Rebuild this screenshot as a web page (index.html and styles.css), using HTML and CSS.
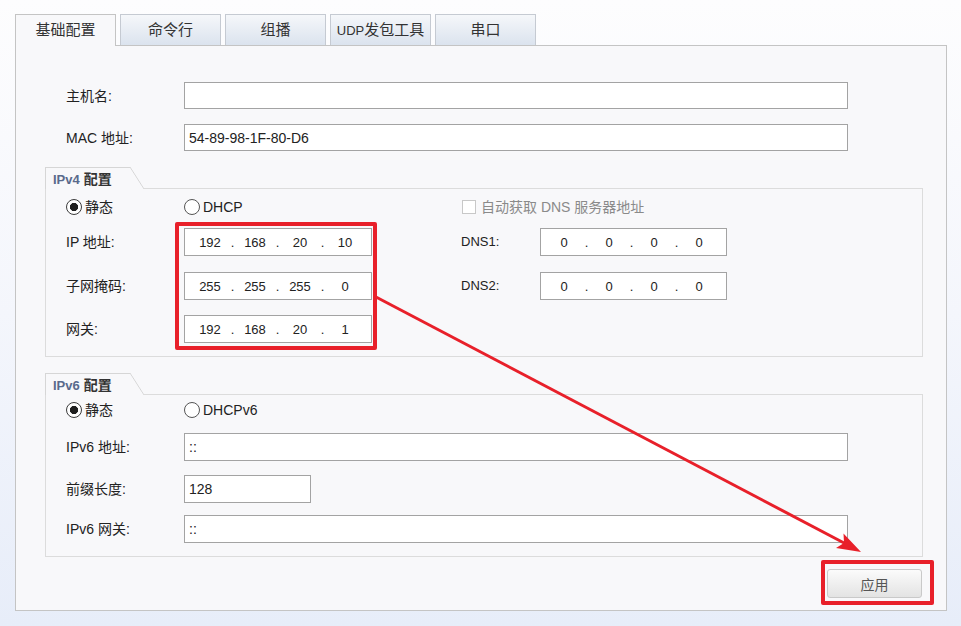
FILE: index.html
```html
<!DOCTYPE html>
<html lang="zh-CN">
<head>
<meta charset="utf-8">
<title>基础配置</title>
<link rel="stylesheet" href="styles.css">
</head>
<body>
<div class="page">
  <div class="tabs">
    <div class="tab active">基础配置</div>
    <div class="tab">命令行</div>
    <div class="tab">组播</div>
    <div class="tab"><span class="small">UDP</span>发包工具</div>
    <div class="tab">串口</div>
  </div>
  <div class="panel">
    <div class="row first">
      <label class="lbl">主机名:</label>
      <div class="field wide"></div>
    </div>
    <div class="row second">
      <label class="lbl">MAC 地址:</label>
      <div class="field wide">54-89-98-1F-80-D6</div>
    </div>

    <div class="section v4">
      <div class="sec-head"><span class="en">IPv4</span> 配置</div>
      <div class="sec-body">
        <div class="line radios">
          <div class="opt col1"><span class="radio on"></span>静态</div>
          <div class="opt col2"><span class="radio"></span>DHCP</div>
          <div class="opt check"><span class="box"></span>自动获取 DNS 服务器地址</div>
        </div>
        <div class="line r1">
          <label class="lbl">IP 地址:</label>
          <div class="field ip"><span>192</span><i>.</i><span>168</span><i>.</i><span>20</span><i>.</i><span>10</span></div>
          <label class="lbl dns">DNS1:</label>
          <div class="field ip dnsip"><span>0</span><i>.</i><span>0</span><i>.</i><span>0</span><i>.</i><span>0</span></div>
        </div>
        <div class="line r2">
          <label class="lbl">子网掩码:</label>
          <div class="field ip"><span>255</span><i>.</i><span>255</span><i>.</i><span>255</span><i>.</i><span>0</span></div>
          <label class="lbl dns">DNS2:</label>
          <div class="field ip dnsip"><span>0</span><i>.</i><span>0</span><i>.</i><span>0</span><i>.</i><span>0</span></div>
        </div>
        <div class="line r3">
          <label class="lbl">网关:</label>
          <div class="field ip"><span>192</span><i>.</i><span>168</span><i>.</i><span>20</span><i>.</i><span>1</span></div>
        </div>
      </div>
    </div>

    <div class="section v6">
      <div class="sec-head"><span class="en">IPv6</span> 配置</div>
      <div class="sec-body">
        <div class="line radios">
          <div class="opt col1"><span class="radio on"></span>静态</div>
          <div class="opt col2"><span class="radio"></span>DHCPv6</div>
        </div>
        <div class="line s1">
          <label class="lbl">IPv6 地址:</label>
          <div class="field wide">::</div>
        </div>
        <div class="line s2">
          <label class="lbl">前缀长度:</label>
          <div class="field short">128</div>
        </div>
        <div class="line s3">
          <label class="lbl">IPv6 网关:</label>
          <div class="field wide">::</div>
        </div>
      </div>
    </div>

    <div class="actions">
      <button class="apply">应用</button>
    </div>
  </div>

  <div class="mark mark-ip"></div>
  <div class="mark mark-btn"></div>
  <svg class="arrow" width="961" height="626" viewBox="0 0 961 626">
    <line x1="376" y1="297" x2="846" y2="544" stroke="#e8202a" stroke-width="3"/>
    <polygon points="861,552 836,548 844,543 843.5,533.5" fill="#e8202a"/>
  </svg>
</div>
</body>
</html>
```

FILE: styles.css
```css
html, body {
  margin: 0;
  padding: 0;
}
body {
  width: 961px;
  height: 626px;
  overflow: hidden;
  background: linear-gradient(#fdfdfe 0%, #f4f6fc 50%, #e7edf9 100%);
  font-family: "Liberation Sans", "Noto Sans CJK SC", sans-serif;
  font-size: 14px;
  color: #222;
}
.page {
  position: relative;
  width: 961px;
  height: 626px;
  padding: 14px 0 0 15px;
  box-sizing: border-box;
}

/* tabs */
.tabs {
  display: flex;
  gap: 4px;
  height: 31px;
  position: relative;
  z-index: 2;
}
.tab {
  width: 101px;
  height: 31px;
  box-sizing: border-box;
  border: 1px solid #c5cad2;
  border-bottom: none;
  background: linear-gradient(#f5f7fa, #dbe3ee);
  text-align: center;
  line-height: 30px;
  font-size: 15px;
  color: #333;
}
.tab .small {
  font-size: 13px;
}
.tab.active {
  background: #f8f8fa;
  border-color: #c4c4c4;
  height: 32px;
}

/* main panel */
.panel {
  width: 932px;
  height: 566px;
  box-sizing: border-box;
  border: 1px solid #c4c4c4;
  background: #f8f8fa;
  padding: 36px 23px 0 29px;
}
.row {
  display: flex;
  align-items: center;
  padding-left: 21px;
  height: 27px;
}
.row.second {
  margin-top: 15px;
}
.lbl {
  width: 118px;
  flex: none;
  line-height: 20px;
}
.field {
  box-sizing: border-box;
  height: 28px;
  border: 1px solid #a3a3a3;
  background: #fff;
  display: flex;
  align-items: center;
  padding-left: 4px;
  font-size: 14px;
  color: #222;
}
.row .field {
  height: 27px;
}
.field.wide {
  width: 664px;
}
.field.short {
  width: 127px;
}

/* sections */
.section {
  width: 878px;
  margin-top: 16px;
}
.sec-head {
  position: relative;
  z-index: 1;
  width: 85px;
  height: 22px;
  box-sizing: border-box;
  border-top: 1px solid #d6d6d6;
  border-left: 1px solid #d6d6d6;
  background: #f8f8fa;
  margin-bottom: -1px;
  padding-left: 7px;
  line-height: 22px;
  font-size: 14px;
  font-weight: bold;
  color: #333;
}
.sec-head::after {
  content: "";
  position: absolute;
  left: 100%;
  top: -1px;
  width: 14px;
  height: 22px;
  background: linear-gradient(to top right, #f8f8fa calc(50% - 0.8px), #d6d6d6 50%, #f8f8fa calc(50% + 0.8px));
}
.sec-head .en {
  color: #5a6a8c;
  font-size: 13px;
}
.sec-body {
  border: 1px solid #dcdcdc;
  padding: 8px 0 13px 20px;
}
.v6 .sec-body {
  padding-top: 5px;
}
.line {
  display: flex;
  align-items: center;
  height: 28px;
}
.line.radios {
  height: 20px;
}
.r1 { margin-top: 11px; }
.r2 { margin-top: 16px; }
.r3 { margin-top: 15px; }
.s1 { margin-top: 13px; }
.s2 { margin-top: 14px; }
.s3 { margin-top: 12px; }

.opt {
  display: flex;
  align-items: center;
  line-height: 20px;
}
.opt.col1 {
  width: 118px;
}
.opt.col2 {
  width: 278px;
}
.radio {
  width: 14px;
  height: 14px;
  border: 1px solid #3c3c3c;
  border-radius: 50%;
  background: #fff;
  margin-right: 3px;
  flex: none;
}
.radio.on {
  background: radial-gradient(circle, #1f1f1f 0, #1f1f1f 3.8px, #fff 4.4px);
}
.opt.col2 .radio {
  border-color: #555;
}
.opt.check {
  color: #8a8a8a;
}
.box {
  width: 14px;
  height: 14px;
  box-sizing: border-box;
  border: 1px solid #c8c8c8;
  background: #fff;
  margin-right: 5px;
}

/* ip fields */
.field.ip {
  width: 188px;
  padding-left: 7px;
  font-size: 13px;
}
.field.ip span {
  width: 36px;
  text-align: center;
}
.field.ip i {
  width: 9px;
  text-align: center;
  font-style: normal;
}
.lbl.dns {
  width: 79px;
  margin-left: 89px;
  font-size: 13px;
}
.field.dnsip {
  width: 187px;
  padding-left: 5px;
}

/* actions */
.actions {
  display: flex;
  justify-content: flex-end;
  width: 877px;
  margin-top: 12px;
}
.apply {
  width: 95px;
  height: 29px;
  border: 1px solid #c9c9c9;
  border-radius: 3px;
  background: linear-gradient(#fbfbfb, #e3e3e3);
  font-family: "Liberation Sans", "Noto Sans CJK SC", sans-serif;
  font-size: 14px;
  color: #555;
  padding: 0;
}

/* annotations */
.mark {
  position: absolute;
  border: 4px solid #e8202a;
  border-radius: 2px;
  box-sizing: border-box;
}
.mark-ip {
  left: 175px;
  top: 222px;
  width: 202px;
  height: 128px;
}
.mark-btn {
  left: 821px;
  top: 560px;
  width: 113px;
  height: 45px;
}
.arrow {
  position: absolute;
  left: 0;
  top: 0;
  pointer-events: none;
}
```
